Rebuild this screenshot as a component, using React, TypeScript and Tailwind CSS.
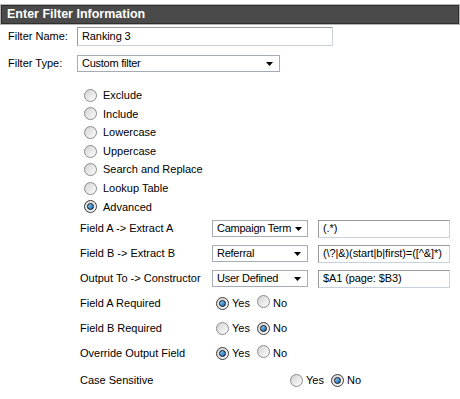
import React from "react";

const Radio = ({ checked }: { checked?: boolean }) => (
  <span
    className={`inline-flex h-[13px] w-[13px] shrink-0 items-center justify-center rounded-full border bg-gradient-to-br from-[#d4d4d4] to-[#fdfdfd] ${
      checked ? "border-[#3a3a3a]" : "border-[#8a8a8a]"
    }`}
  >
    {checked && (
      <span className="h-[7px] w-[7px] rounded-full border border-[#111] bg-gradient-to-br from-[#8fd8ff] to-[#0562b0]" />
    )}
  </span>
);

const Select = ({ value, width }: { value: string; width: string }) => (
  <div
    className={`flex h-[17px] shrink-0 items-center justify-between whitespace-nowrap border border-[#a5acb5] bg-white pl-[4px] pr-[6px] tracking-[-0.25px] ${width}`}
  >
    <span>{value}</span>
    <svg width="7" height="4" viewBox="0 0 7 4" className="ml-1 shrink-0">
      <path d="M0 0h7L3.5 4z" fill="#000" />
    </svg>
  </div>
);

const TextBox = ({ value, width, height }: { value: string; width: string; height: string }) => (
  <div
    className={`flex shrink-0 items-center overflow-hidden whitespace-nowrap border border-[#9a9a9a] border-r-[#c9d2dc] border-b-[#c9d2dc] bg-white pl-[4px] tracking-[-0.1px] ${width} ${height}`}
  >
    {value}
  </div>
);

const YesNo = ({ yes, offset }: { yes: boolean; offset: string }) => (
  <div className={`flex items-center ${offset}`}>
    <Radio checked={yes} />
    <span className="ml-[3px]">Yes</span>
    <span className="ml-[7px]">
      <Radio checked={!yes} />
    </span>
    <span className="ml-[3px]">No</span>
  </div>
);

export default function App() {
  const types = ["Exclude", "Include", "Lowercase", "Uppercase", "Search and Replace", "Lookup Table", "Advanced"];

  const fields = [
    { label: "Field A -> Extract A", sel: "Campaign Term", text: "(.*)" },
    { label: "Field B -> Extract B", sel: "Referral", text: "(\\?|&)(start|b|first)=([^&]*)" },
    { label: "Output To -> Constructor", sel: "User Defined", text: "$A1 (page: $B3)" },
  ];

  const required = [
    { label: "Field A Required", yes: true },
    { label: "Field B Required", yes: false },
    { label: "Override Output Field", yes: true },
  ];

  return (
    <div className="h-[399px] w-[460px] bg-white pt-1 text-[11px] text-black" style={{ fontFamily: "'Liberation Sans', Arial, sans-serif" }}>
      {/* Header bar */}
      <div className="bg-[#b4b4b4] p-px">
        <div className="flex h-[19px] items-center border border-[#2e2e2e] bg-[#4a4a4a] pl-[5px] text-[12.5px] font-bold text-white">
          Enter Filter Information
        </div>
      </div>

      {/* Filter name / type */}
      <div className="mt-[2px] flex h-[19px] items-center">
        <span className="w-[77px] shrink-0 pl-[8px]">Filter Name:</span>
        <TextBox value="Ranking 3" width="w-[256px]" height="h-[19px]" />
      </div>
      <div className="mt-[9px] flex h-[17px] items-center">
        <span className="w-[77px] shrink-0 pl-[8px]">Filter Type:</span>
        <Select value="Custom filter" width="w-[203px]" />
      </div>

      {/* Filter type options */}
      <div className="mt-[14px] pl-[84px]">
        {types.map((t) => (
          <div key={t} className="flex h-[18.6px] items-center">
            <Radio checked={t === "Advanced"} />
            <span className="ml-[6px]">{t}</span>
          </div>
        ))}
      </div>

      {/* Advanced fields */}
      <div className="pl-[80px]">
        {fields.map((f) => (
          <div key={f.label} className="flex h-[25px] items-center">
            <span className="w-[132px] shrink-0 whitespace-nowrap">{f.label}</span>
            <Select value={f.sel} width="w-[96px]" />
            <div className="ml-[10px] shrink-0">
              <TextBox value={f.text} width="w-[132px]" height="h-[18px]" />
            </div>
          </div>
        ))}
        {required.map((r) => (
          <div key={r.label} className="flex h-[25px] items-center">
            <span className="w-[136px] shrink-0">{r.label}</span>
            <YesNo yes={r.yes} offset="" />
          </div>
        ))}
        <div className="mt-[2px] flex h-[25px] items-center">
          <span className="w-[132px] shrink-0">Case Sensitive</span>
          <YesNo yes={false} offset="ml-[78px]" />
        </div>
      </div>
    </div>
  );
}
